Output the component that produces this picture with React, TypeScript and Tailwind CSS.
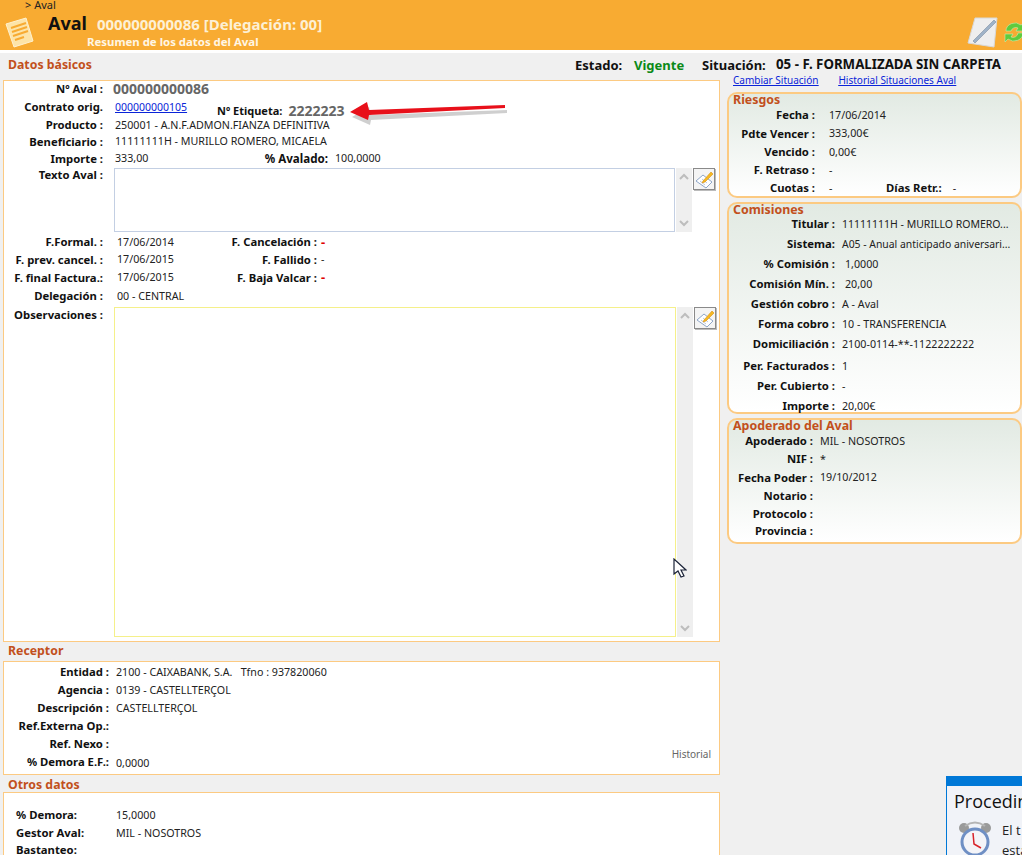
import type { FC, ReactNode } from "react";

const FONT = "font-['Noto_Sans','DejaVu_Sans',sans-serif]";

type RowProps = {
  label: string;
  labelW: string;
  gap: string;
  h: string;
  children?: ReactNode;
};

const Row: FC<RowProps> = ({ label, labelW, gap, h, children }) => (
  <div className={`flex items-center ${h}`}>
    <span className={`shrink-0 whitespace-nowrap text-right text-[11.3px] font-bold text-[#111] ${labelW}`}>
      {label}
    </span>
    <span className={`flex items-center whitespace-nowrap text-[#222] ${gap}`}>{children}</span>
  </div>
);

const SectionTitle: FC<{ children: ReactNode; className: string }> = ({ children, className }) => (
  <div className={`text-[12.3px] font-bold leading-none text-[#c2501c] ${className}`}>{children}</div>
);

const EditButton = () => (
  <button
    type="button"
    className="ml-px flex h-[22px] w-[22px] shrink-0 items-center justify-center border border-[#8a8a8a] bg-[#f4f4f4] shadow-[1px_1px_0_#bbb]"
  >
    <svg width="19" height="19" viewBox="0 0 19 19">
      <path d="M1 11 8 5l9 7-6 6z" fill="#fff" stroke="#8ea6c8" />
      <path d="M5 11l5 4M7 9l5 4" stroke="#b9c9de" />
      <path d="M8 11 16 2l2 2-8 8-3 1z" fill="#f5b921" stroke="#d98f10" strokeWidth="0.6" />
    </svg>
  </button>
);

const Scrollbar: FC<{ className: string }> = ({ className }) => (
  <div className={`flex w-[16px] shrink-0 flex-col items-center justify-between bg-[#efefef] py-[5px] ${className}`}>
    <svg width="10" height="7" viewBox="0 0 10 7">
      <path d="M1 6 5 2l4 4" fill="none" stroke="#bdbdbd" strokeWidth="2" />
    </svg>
    <svg width="10" height="7" viewBox="0 0 10 7">
      <path d="M1 1l4 4 4-4" fill="none" stroke="#bdbdbd" strokeWidth="2" />
    </svg>
  </div>
);

const SideBox: FC<{ title: string; className: string; children: ReactNode }> = ({ title, className, children }) => (
  <section
    className={`rounded-[10px] border-2 border-[#fcca82] bg-gradient-to-b from-[#e2eae3] to-[#ffffff] pl-[4px] ${className}`}
  >
    <div className="-mt-px text-[12.4px] font-bold leading-[13px] text-[#c2501c]">{title}</div>
    {children}
  </section>
);

const riesgoLabel = "w-[82px]";
const comLabel = "w-[102px]";
const apoLabel = "w-[80px]";

export default function App() {
  return (
    <div className={`relative h-[855px] w-[1022px] overflow-hidden bg-[#f0f0f0] text-[10.7px] leading-none ${FONT}`}>
      {/* cabecera */}
      <header className="relative h-[50px] bg-[#f8ab32]">
        <div className="pl-[25px] text-[11px] leading-[10px] text-[#222]">&gt; Aval</div>
        <div className="flex">
          <svg width="32" height="32" viewBox="0 0 32 32" className="ml-[4px] mt-[6px] shrink-0">
            <path d="M2 8 22 2l7 23-19 6z" fill="#fde4a8" stroke="#fff1cf" />
            <path d="M7 12l15-5M8 16l15-5M9 20l15-5M11 24l9-3" stroke="#f8ab32" strokeWidth="2" />
          </svg>
          <div className="ml-[12px]">
            <div className="flex items-baseline pt-[2px]">
              <span className="text-[18px] font-bold leading-[22px] text-[#111]">Aval</span>
              <span className="ml-[10px] text-[15px] font-bold leading-[22px] text-[#fdf0d5]">
                000000000086 [Delegación: 00]
              </span>
            </div>
            <div className="ml-[39px] mt-px text-[11.4px] font-bold leading-[12px] text-[#fff6e4]">
              Resumen de los datos del Aval
            </div>
          </div>
        </div>
        <svg width="32" height="32" viewBox="0 0 32 32" className="absolute left-[967px] top-[16px]">
          <path d="M8 2h22l-3 29-26-4z" fill="#eeeeee" stroke="#d8d8d8" />
          <path d="M6 25 27 4l2 2L8 27z" fill="#9fb3c8" stroke="#7d8fa3" strokeWidth="0.6" />
        </svg>
        <svg width="20" height="22" viewBox="0 0 20 22" className="absolute left-[1004px] top-[21px]">
          <path d="M2 10a9 8 0 0 1 15-6l3-2v8h-8l2-3a5 5 0 0 0-7 3z" fill="#5fcb3e" stroke="#c9efb2" strokeWidth="0.6" />
          <path d="M19 12a9 8 0 0 1-15 6l-3 3v-8h8l-2 3a5 5 0 0 0 7-4z" fill="#5fcb3e" stroke="#c9efb2" strokeWidth="0.6" />
        </svg>
      </header>
      <div className="h-[3px] bg-white" />

      {/* barra de estado */}
      <div className="flex h-[27px] items-center pb-[3px]">
        <SectionTitle className="w-[575px] pl-[8px]">Datos básicos</SectionTitle>
        <span className="w-[59px] text-[13px] font-bold text-[#111]">Estado:</span>
        <span className="w-[68px] text-[13px] font-bold text-[#0b8a17]">Vigente</span>
        <span className="w-[74px] text-[13px] font-bold text-[#111]">Situación:</span>
        <span className="whitespace-nowrap text-[13.3px] font-bold text-[#111]">05 - F. FORMALIZADA SIN CARPETA</span>
      </div>

      <div className="flex">
        {/* columna izquierda */}
        <main className="ml-[3px] w-[717px] shrink-0">
          <section className="relative h-[562px] border border-[#fcca82] bg-white pl-[1px]">
            <Row label="Nº Aval :" labelW="w-[98px]" gap="ml-[10px] text-[14px] font-bold text-[#666]" h="h-[16px]">
              000000000086
            </Row>
            <div className="flex h-[20px] items-center">
              <Row label="Contrato orig." labelW="w-[98px]" gap="ml-[12px]" h="h-[19px]">
                <a className="w-[102px] text-[10.5px] text-[#0a24d8] underline">000000000105</a>
              </Row>
              <span className="mt-[6px] text-[11px] font-bold text-[#111]">Nº Etiqueta:</span>
              <span className="ml-[6px] mt-[8px] text-[14px] font-bold text-[#666]">2222223</span>
            </div>
            <Row label="Producto :" labelW="w-[98px]" gap="ml-[12px]" h="h-[16px]">
              250001 - A.N.F.ADMON.FIANZA DEFINITIVA
            </Row>
            <Row label="Beneficiario :" labelW="w-[98px]" gap="ml-[12px]" h="h-[17px]">
              11111111H - MURILLO ROMERO, MICAELA
            </Row>
            <div className="flex h-[17px] items-center">
              <Row label="Importe :" labelW="w-[98px]" gap="ml-[12px] w-[100px]" h="h-[17px]">
                333,00
              </Row>
              <span className="ml-[15px] w-[98px] text-right text-[11.6px] font-bold text-[#111]">% Avalado:</span>
              <span className="ml-[7px] text-[#222]">100,0000</span>
            </div>

            <div className="flex h-[65px]">
              <span className="w-[98px] shrink-0 text-right text-[11.3px] font-bold leading-[16px] text-[#111]">Texto Aval :</span>
              <div className="ml-[11px] mt-px h-[64px] w-[561px] border border-[#c3cfe3] bg-white" />
              <Scrollbar className="ml-px mt-px h-[64px]" />
              <div className="mt-px">
                <EditButton />
              </div>
            </div>

            <div className="mt-px flex h-[18px] items-center">
              <Row label="F.Formal. :" labelW="w-[98px]" gap="ml-[14px] w-[100px]" h="h-[18px]">
                17/06/2014
              </Row>
              <span className="w-[100px] text-right text-[11.3px] font-bold text-[#111]">F. Cancelación :</span>
              <span className="ml-[4px] text-[13px] font-bold text-[#e00000]">-</span>
            </div>
            <div className="flex h-[17px] items-center">
              <Row label="F. prev. cancel. :" labelW="w-[98px]" gap="ml-[14px] w-[100px]" h="h-[17px]">
                17/06/2015
              </Row>
              <span className="w-[100px] text-right text-[11.3px] font-bold text-[#111]">F. Fallido :</span>
              <span className="ml-[4px] text-[#222]">-</span>
            </div>
            <div className="flex h-[19px] items-center">
              <Row label="F. final Factura.:" labelW="w-[98px]" gap="ml-[14px] w-[100px]" h="h-[19px]">
                17/06/2015
              </Row>
              <span className="w-[100px] text-right text-[11.3px] font-bold text-[#111]">F. Baja Valcar :</span>
              <span className="ml-[4px] text-[13px] font-bold text-[#e00000]">-</span>
            </div>
            <Row label="Delegación :" labelW="w-[98px]" gap="ml-[14px]" h="h-[18px]">
              00 - CENTRAL
            </Row>

            <div className="mt-[2px] flex h-[332px]">
              <span className="w-[98px] shrink-0 text-right text-[11.3px] font-bold leading-[16px] text-[#111]">Observaciones :</span>
              <div className="ml-[11px] h-[330px] w-[562px] border border-[#f5f08a] bg-white" />
              <Scrollbar className="ml-px h-[330px]" />
              <EditButton />
            </div>
          </section>

          <SectionTitle className="flex h-[19px] items-center pl-[5px]">Receptor</SectionTitle>
          <section className="relative h-[114px] border border-[#fcca82] bg-white pt-px">
            <Row label="Entidad :" labelW="w-[105px]" gap="ml-[7px]" h="h-[18px]">
              2100 - CAIXABANK, S.A.&nbsp;&nbsp; Tfno : 937820060
            </Row>
            <Row label="Agencia :" labelW="w-[105px]" gap="ml-[7px]" h="h-[18px]">
              0139 - CASTELLTERÇOL
            </Row>
            <Row label="Descripción :" labelW="w-[105px]" gap="ml-[7px]" h="h-[18px]">
              CASTELLTERÇOL
            </Row>
            <Row label="Ref.Externa Op.:" labelW="w-[105px]" gap="ml-[7px]" h="h-[18px]" />
            <Row label="Ref. Nexo :" labelW="w-[105px]" gap="ml-[7px]" h="h-[18px]" />
            <div className="flex h-[18px] items-center justify-between pr-[8px]">
              <Row label="% Demora E.F.:" labelW="w-[105px]" gap="ml-[7px] mt-[3px]" h="h-[18px]">
                0,0000
              </Row>
              <span className="-mt-[16px] text-[10px] text-[#666]">Historial</span>
            </div>
          </section>

          <SectionTitle className="flex h-[17px] items-center pl-[5px] pt-[3px]">Otros datos</SectionTitle>
          <section className="h-[70px] border border-[#fcca82] bg-white pl-[12px] pt-[13px]">
            <Row label="% Demora:" labelW="w-[100px] !text-left" gap="" h="h-[18px]">
              15,0000
            </Row>
            <Row label="Gestor Aval:" labelW="w-[100px] !text-left" gap="" h="h-[18px]">
              MIL - NOSOTROS
            </Row>
            <Row label="Bastanteo:" labelW="w-[100px] !text-left" gap="" h="h-[16px]" />
          </section>
        </main>

        {/* columna derecha */}
        <aside className="ml-[7px] w-[295px] shrink-0">
          <div className="-mt-[6px] flex h-[18px] items-start gap-[20px] pl-[6px] text-[10px] leading-[12px] text-[#0a24d8] underline">
            <a>Cambiar Situación</a>
            <a>Historial Situaciones Aval</a>
          </div>
          <SideBox title="Riesgos" className="h-[106px]">
            <Row label="Fecha :" labelW={riesgoLabel} gap="ml-[14px]" h="h-[18px]">17/06/2014</Row>
            <Row label="Pdte Vencer :" labelW={riesgoLabel} gap="ml-[14px]" h="h-[19px]">333,00€</Row>
            <Row label="Vencido :" labelW={riesgoLabel} gap="ml-[14px]" h="h-[18px]">0,00€</Row>
            <Row label="F. Retraso :" labelW={riesgoLabel} gap="ml-[14px]" h="h-[18px]">-</Row>
            <div className="flex h-[18px] items-center">
              <Row label="Cuotas :" labelW={riesgoLabel} gap="ml-[14px] w-[57px]" h="h-[18px]">-</Row>
              <span className="text-[11.3px] font-bold text-[#111]">Días Retr.:</span>
              <span className="ml-[11px] text-[#222]">-</span>
            </div>
          </SideBox>

          <SideBox title="Comisiones" className="mt-[4px] h-[212px]">
            <div className="-mt-[2px]">
              <Row label="Titular :" labelW={comLabel} gap="ml-[7px] text-[10.5px]" h="h-[20px]">11111111H - MURILLO ROMERO...</Row>
            </div>
            <Row label="Sistema:" labelW={comLabel} gap="ml-[7px] text-[10.4px]" h="h-[20px]">A05 - Anual anticipado aniversari...</Row>
            <Row label="% Comisión :" labelW={comLabel} gap="ml-[10px]" h="h-[20px]">1,0000</Row>
            <Row label="Comisión Mín. :" labelW={comLabel} gap="ml-[10px]" h="h-[20px]">20,00</Row>
            <Row label="Gestión cobro :" labelW={comLabel} gap="ml-[7px]" h="h-[20px]">A - Aval</Row>
            <Row label="Forma cobro :" labelW={comLabel} gap="ml-[7px]" h="h-[20px]">10 - TRANSFERENCIA</Row>
            <Row label="Domiciliación :" labelW={comLabel} gap="ml-[7px]" h="h-[20px]">2100-0114-**-1122222222</Row>
            <div className="mt-[2px]">
              <Row label="Per. Facturados :" labelW={comLabel} gap="ml-[7px]" h="h-[20px]">1</Row>
            </div>
            <Row label="Per. Cubierto :" labelW={comLabel} gap="ml-[7px]" h="h-[20px]">-</Row>
            <Row label="Importe :" labelW={comLabel} gap="ml-[7px]" h="h-[20px]">20,00€</Row>
          </SideBox>

          <SideBox title="Apoderado del Aval" className="mt-[4px] h-[126px]">
            <Row label="Apoderado :" labelW={apoLabel} gap="ml-[7px]" h="h-[18px]">MIL - NOSOTROS</Row>
            <Row label="NIF :" labelW={apoLabel} gap="ml-[7px]" h="h-[18px]">*</Row>
            <Row label="Fecha Poder :" labelW={apoLabel} gap="ml-[7px]" h="h-[19px]">19/10/2012</Row>
            <Row label="Notario :" labelW={apoLabel} gap="ml-[7px]" h="h-[18px]" />
            <Row label="Protocolo :" labelW={apoLabel} gap="ml-[7px]" h="h-[18px]" />
            <Row label="Provincia :" labelW={apoLabel} gap="ml-[7px]" h="h-[16px]" />
          </SideBox>
        </aside>
      </div>

      {/* flecha roja sobre la captura */}
      <svg width="170" height="36" viewBox="0 0 170 36" className="absolute left-[345px] top-[96px]">
        <path d="M5 16 22 6l2 8 136-5v3L24 19l-1 5z" fill="#888" opacity="0.4" transform="translate(2 5)" />
        <path d="M5 16 22 6l2 8 136-5v3L24 19l-1 5z" fill="#e8101a" />
      </svg>

      {/* cursor */}
      <svg width="14" height="20" viewBox="0 0 14 20" className="absolute left-[673px] top-[558px]">
        <path d="M1 1v15l4-3 3 6 3-1-3-6h5z" fill="#fff" stroke="#1b2338" strokeWidth="1.2" />
      </svg>

      {/* aviso */}
      <div className="absolute left-[946px] top-[776px] h-[79px] w-[76px] overflow-hidden border-l border-[#0078d7] bg-[#f1f3f8] font-['Open_Sans',sans-serif]">
        <div className="h-[10px] bg-[#0078d7]" />
        <div className="whitespace-nowrap pl-[7px] pt-[3px] text-[18px] leading-[24px] text-[#111]">Procedin</div>
        <div className="mt-[7px] flex">
          <svg width="36" height="36" viewBox="0 0 36 36" className="ml-[10px] shrink-0">
            <circle cx="7" cy="8" r="5" fill="#9a9a9a" />
            <circle cx="29" cy="8" r="5" fill="#9a9a9a" />
            <path d="M8 6q10-7 20 0" fill="none" stroke="#b5b5b5" strokeWidth="2" />
            <circle cx="18" cy="22" r="13" fill="#f4f4f8" stroke="#6f8fc4" strokeWidth="3" />
            <path d="M16 13l1 11 7 4" fill="none" stroke="#d8232a" strokeWidth="1.5" />
          </svg>
          <div className="ml-[9px] whitespace-nowrap text-[13px] leading-[20px] text-[#222]">
            El t<br />
            esta
          </div>
        </div>
      </div>
    </div>
  );
}
